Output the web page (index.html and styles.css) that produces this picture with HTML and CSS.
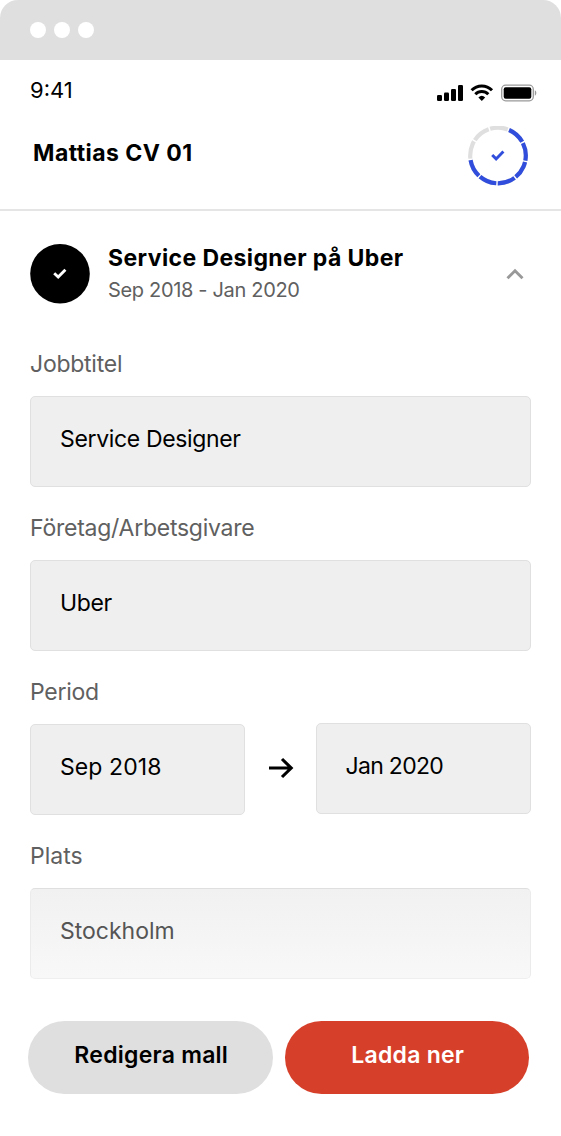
FILE: index.html
```html
<!DOCTYPE html>
<html lang="sv">

<head>
    <meta charset="UTF-8">
    <meta name="viewport" content="width=device-width, initial-scale=1.0">
    <title>Mattias CV 01</title>
    <link rel="stylesheet" href="styles.css">
</head>

<body>
    <div class="titlebar">
        <span class="dot"></span>
        <span class="dot"></span>
        <span class="dot"></span>
    </div>
    <div class="statusbar">
        <span class="time">9:41</span>
        <svg class="status-icons" width="100" height="18" viewBox="0 0 100 18">
            <!-- signal -->
            <rect x="0" y="11" width="5" height="6" rx="1.2" />
            <rect x="7" y="8.5" width="5" height="8.5" rx="1.2" />
            <rect x="14" y="5" width="5" height="12" rx="1.2" />
            <rect x="21" y="1" width="5" height="16" rx="1.2" />
            <!-- wifi -->
            <g fill="none" stroke="#000" stroke-width="3">
                <path d="M34.6 6.2a14.3 14.3 0 0 1 20.4 0" />
                <path d="M38.3 10.2a9.2 9.2 0 0 1 13 0" />
            </g>
            <path d="M41.4 13.4a5 5 0 0 1 6.8 0L44.8 17z" />
            <!-- battery -->
            <rect x="64.7" y="1.2" width="31.6" height="15.6" rx="4" fill="none" stroke="#999" stroke-width="1.3" />
            <rect x="66.7" y="3.2" width="27.6" height="11.6" rx="2" />
            <path d="M97.8 6.3c2 .8 2 4.6 0 5.4z" fill="#999" />
        </svg>
    </div>
    <header>
        <h1>Mattias CV 01</h1>
        <svg class="progress" width="60" height="60" viewBox="0 0 60 60" fill="none">
            <circle cx="30" cy="29.5" r="27.8" pathLength="360" stroke="#dfdfdf" stroke-width="4.2" stroke-dasharray="37 3" transform="rotate(293.5 30 29.5)" />
            <circle cx="30" cy="29.5" r="27.8" pathLength="360" stroke="#304edb" stroke-width="4.2" stroke-dasharray="37 3 37 3 37 3 37 3 37 3 37 123" transform="rotate(293.5 30 29.5)" />
            <path d="M24.2 29l3.9 3.9 7.3-7.5" stroke="#304edb" stroke-width="2.9" />
        </svg>
    </header>
    <main>
        <div class="job">
            <svg class="job-check" width="60" height="60" viewBox="0 0 60 60">
                <circle cx="30" cy="29.8" r="29.8" />
                <path d="M24.2 29.2l4 3.8 7.2-7.3" fill="none" stroke="#fff" stroke-width="2.9" />
            </svg>
            <div class="job-text">
                <h2>Service Designer på Uber</h2>
                <p>Sep 2018 - Jan 2020</p>
            </div>
            <svg class="chevron" width="18" height="12" viewBox="0 0 18 12">
                <path d="M1.5 10.3L9 2.8l7.5 7.5" fill="none" stroke="#999" stroke-width="2.9" />
            </svg>
        </div>
        <div class="field">
            <div class="label">Jobbtitel</div>
            <div class="input">Service Designer</div>
        </div>
        <div class="field">
            <div class="label">Företag/Arbetsgivare</div>
            <div class="input">Uber</div>
        </div>
        <div class="field">
            <div class="label">Period</div>
            <div class="period">
                <div class="input from">Sep 2018</div>
                <svg class="arrow" width="26" height="22" viewBox="0 0 26 22">
                    <path d="M1 11h22.5M14 2l9.2 9-9.2 9" fill="none" stroke="#000" stroke-width="3.1" />
                </svg>
                <div class="input to">Jan 2020</div>
            </div>
        </div>
        <div class="field">
            <div class="label place">Plats</div>
            <div class="input faded">Stockholm</div>
        </div>
    </main>
    <footer>
        <button class="edit">Redigera mall</button>
        <button class="download">Ladda ner</button>
    </footer>
</body>

</html>
```
FILE: styles.css
```css
html,
body {
    margin: 0;
    background: #fff;
}

body {
    font-family: Inter, "Liberation Sans", sans-serif;
    font-size: 23px;
    color: #000;
}

h1,
h2,
p {
    margin: 0;
}

svg {
    display: block;
    flex: none;
}

.titlebar {
    display: flex;
    align-items: center;
    gap: 8px;
    height: 60px;
    padding-left: 30px;
    box-sizing: border-box;
    background: #dfdfdf;
    border-radius: 18px 18px 0 0;
}

.dot {
    width: 16px;
    height: 16px;
    border-radius: 50%;
    background: #fff;
}

.statusbar {
    display: flex;
    justify-content: space-between;
    height: 60px;
    padding: 0 24px 0 30px;
}

.time {
    margin-top: 15px;
    font-size: 22px;
    line-height: 30px;
}

.status-icons {
    margin-top: 24px;
}

header {
    display: flex;
    justify-content: space-between;
    height: 89px;
    padding: 0 33px;
    border-bottom: 2px solid #e5e5e5;
}

h1 {
    margin-top: 18px;
    font-size: 23px;
    line-height: 30px;
    font-weight: 700;
    letter-spacing: 0.45px;
}

.progress {
    margin-top: 6px;
}

main {
    padding: 0 30.5px 0 30px;
}

.job {
    display: flex;
    align-items: center;
    height: 60px;
    margin-top: 33px;
    margin-bottom: 44.5px;
    padding-right: 7px;
}

.job-text {
    flex: 1;
    margin-left: 18px;
}

h2 {
    font-size: 23px;
    line-height: 32px;
    font-weight: 700;
    letter-spacing: 0.4px;
}

.job p {
    font-size: 20px;
    line-height: 33px;
    letter-spacing: -0.33px;
    color: #606060;
}

.field {
    margin-bottom: 26.3px;
}

.label {
    margin-bottom: 16px;
    line-height: 31px;
    letter-spacing: -0.25px;
    color: #606060;
}

.place {
    letter-spacing: 0;
}

.input {
    height: 91px;
    padding: 0 29px;
    box-sizing: border-box;
    border: 1.5px solid #e0e0e0;
    border-radius: 5px;
    background: #efefef;
    line-height: 84px;
    letter-spacing: -0.35px;
}

.period {
    display: flex;
    justify-content: space-between;
    align-items: center;
}

.period .input {
    width: 215px;
}

.period .from {
    letter-spacing: 0.1px;
}

.period .to {
    margin-top: -2px;
    letter-spacing: -0.7px;
}

.arrow {
    margin-top: -4px;
    margin-left: 1px;
}

.input.faded {
    border-color: #dfdfdf #ebebeb #efefef;
    background: linear-gradient(#f1f1f1, #f8f8f8);
    color: #555;
    letter-spacing: 0;
}

footer {
    display: flex;
    gap: 12px;
    margin-top: 41.3px;
    padding: 0 32px 0 28px;
}

button {
    flex: 1;
    height: 73px;
    padding: 0 0 5px 2px;
    border: 0;
    border-radius: 37px;
    font-family: inherit;
    font-size: 23px;
    font-weight: 600;
    letter-spacing: 0.25px;
}

.edit {
    background: #dfdfdf;
    color: #000;
}

.download {
    background: #d6402a;
    color: #fff;
}
```
